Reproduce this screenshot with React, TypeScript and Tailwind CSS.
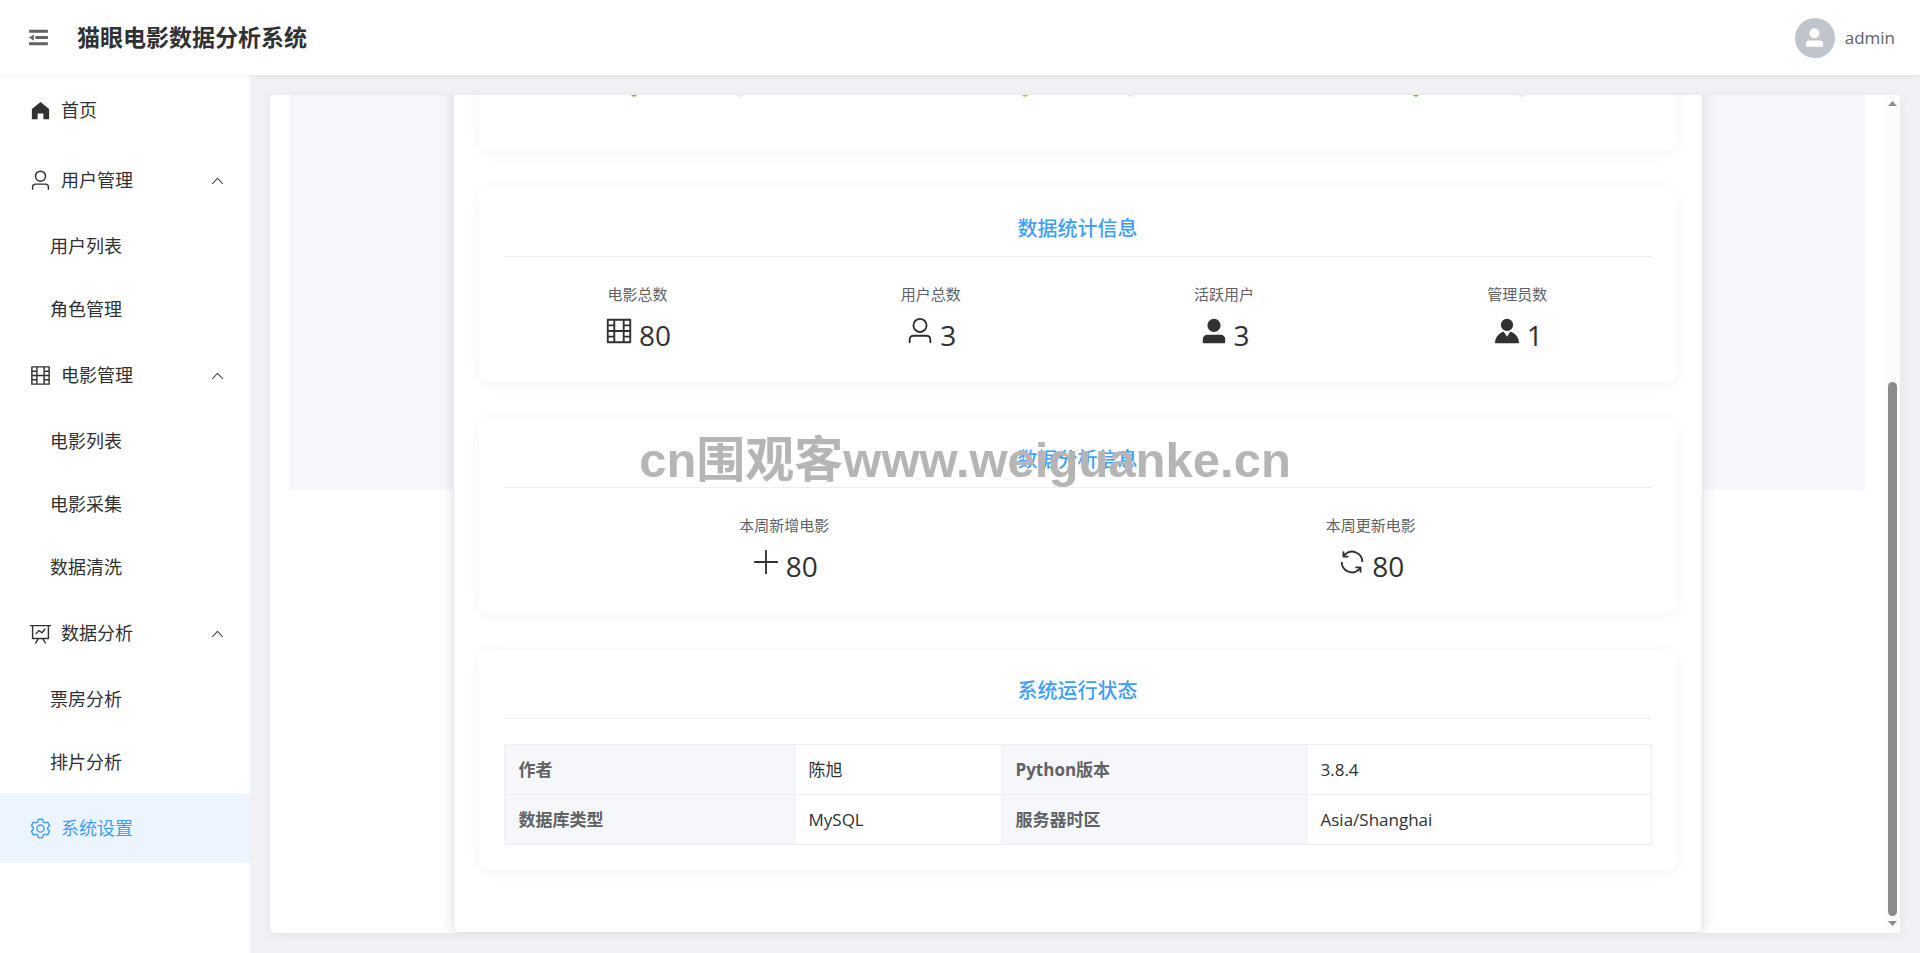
import React from "react";

const icons = {
  fold: "M896 192H128v128h768V192zm0 256H384v128h512V448zm0 256H128v128h768V704zM320 384 128 512l192 128V384z",
  home: "M512 128 128 447.936V896h255.936V640H640v256h255.936V447.936z",
  user: "M512 512a192 192 0 1 0 0-384 192 192 0 0 0 0 384zm0 64a256 256 0 1 1 0-512 256 256 0 0 1 0 512zm320 320v-96a96 96 0 0 0-96-96H288a96 96 0 0 0-96 96v96a32 32 0 1 1-64 0v-96a160 160 0 0 1 160-160h448a160 160 0 0 1 160 160v96a32 32 0 1 1-64 0z",
  userFilled:
    "M288 320a224 224 0 1 0 448 0 224 224 0 1 0-448 0zm544 608H160a32 32 0 0 1-32-32v-96a160 160 0 0 1 160-160h448a160 160 0 0 1 160 160v96a32 32 0 0 1-32 32z",
  avatar:
    "M628.736 528.896A416 416 0 0 1 928 928H96a415.872 415.872 0 0 1 299.264-399.104L512 704l116.736-175.104zM720 304a208 208 0 1 1-416 0 208 208 0 0 1 416 0z",
  film: "M160 160v704h704V160H160zm-32-64h768a32 32 0 0 1 32 32v768a32 32 0 0 1-32 32H128a32 32 0 0 1-32-32V128a32 32 0 0 1 32-32zM320 288V128h64v352h256V128h64v160h160v64H704v128h160v64H704v128h160v64H704v160h-64V544H384v352h-64V736H128v-64h192V544H128v-64h192V352H128v-64h192z",
  dataLine:
    "M359.168 768H160a32 32 0 0 1-32-32V192H64a32 32 0 0 1 0-64h896a32 32 0 1 1 0 64h-64v544a32 32 0 0 1-32 32H665.216l110.848 192h-73.856L591.36 768H433.024L322.176 960H248.32L359.168 768zM832 192H192v512h640V192zM342.656 534.656a32 32 0 1 1-45.312-45.312L444.992 341.76l125.44 94.08L679.04 300.032a32 32 0 1 1 49.92 39.936L581.632 524.224 451.008 426.24 342.656 534.592z",
  setting:
    "M600.704 64a32 32 0 0 1 30.464 22.208l35.2 109.376c14.784 7.232 28.928 15.36 42.432 24.512l112.384-24.192a32 32 0 0 1 34.432 15.36L944.32 364.8a32 32 0 0 1-4.032 37.504l-77.12 85.12a357.12 357.12 0 0 1 0 49.024l77.12 85.248a32 32 0 0 1 4.032 37.504l-88.704 153.6a32 32 0 0 1-34.432 15.296L708.8 803.904c-13.44 9.088-27.648 17.28-42.368 24.512l-35.264 109.376A32 32 0 0 1 600.704 960H423.296a32 32 0 0 1-30.464-22.208L357.696 828.48a351.616 351.616 0 0 1-42.56-24.64l-112.32 24.256a32 32 0 0 1-34.432-15.36L79.68 659.2a32 32 0 0 1 4.032-37.504l77.12-85.248a357.12 357.12 0 0 1 0-48.896l-77.12-85.248A32 32 0 0 1 79.68 364.8l88.704-153.6a32 32 0 0 1 34.432-15.296l112.32 24.256c13.568-9.152 27.776-17.408 42.56-24.64l35.2-109.312A32 32 0 0 1 423.232 64H600.64zm-23.424 64H446.72l-36.352 113.088-24.512 11.968a294.113 294.113 0 0 0-34.816 20.096l-22.656 15.36-116.224-25.088-65.28 113.152 79.68 88.192-1.92 27.136a293.12 293.12 0 0 0 0 40.192l1.92 27.136-79.808 88.192 65.344 113.152 116.224-25.024 22.656 15.296a294.113 294.113 0 0 0 34.816 20.096l24.512 11.968L446.72 896h130.688l36.48-113.152 24.448-11.904a288.282 288.282 0 0 0 34.752-20.096l22.592-15.296 116.288 25.024 65.28-113.152-79.744-88.192 1.92-27.136a293.12 293.12 0 0 0 0-40.256l-1.92-27.136 79.808-88.128-65.344-113.152-116.288 24.96-22.592-15.232a287.616 287.616 0 0 0-34.752-20.096l-24.448-11.904L577.344 128zM512 320a192 192 0 1 1 0 384 192 192 0 0 1 0-384zm0 64a128 128 0 1 0 0 256 128 128 0 0 0 0-256z",
  plus: "M480 480V128a32 32 0 0 1 64 0v352h352a32 32 0 1 1 0 64H544v352a32 32 0 1 1-64 0V544H128a32 32 0 0 1 0-64z",
  refresh:
    "M771.776 794.88A384 384 0 0 1 128 512h64a320 320 0 0 0 555.712 216.448H654.72a32 32 0 1 1 0-64h149.056a32 32 0 0 1 32 32v148.928a32 32 0 1 1-64 0v-50.56zM276.288 295.616h92.992a32 32 0 0 1 0 64H220.16a32 32 0 0 1-32-32V178.56a32 32 0 0 1 64 0v50.56A384 384 0 0 1 896.128 512h-64a320 320 0 0 0-555.776-216.384z",
  arrowUp:
    "m488.832 344.32-339.84 356.672a32 32 0 0 0 0 44.16l.384.384a29.44 29.44 0 0 0 42.688 0l320-335.872 319.872 335.872a29.44 29.44 0 0 0 42.688 0l.384-.384a32 32 0 0 0 0-44.16L535.168 344.32a32 32 0 0 0-46.336 0z",
};

type IconName = keyof typeof icons;

function Icon({ name, className }: { name: IconName; className: string }) {
  return (
    <svg
      viewBox="0 0 1024 1024"
      fill="currentColor"
      aria-hidden="true"
      className={`shrink-0 ${className}`}
    >
      <path d={icons[name]} />
    </svg>
  );
}

type MenuGroup = {
  title: string;
  icon: IconName;
  children?: string[];
};

const menu: MenuGroup[] = [
  { title: "首页", icon: "home" },
  { title: "用户管理", icon: "user", children: ["用户列表", "角色管理"] },
  {
    title: "电影管理",
    icon: "film",
    children: ["电影列表", "电影采集", "数据清洗"],
  },
  { title: "数据分析", icon: "dataLine", children: ["票房分析", "排片分析"] },
  { title: "系统设置", icon: "setting" },
];

function Sidebar({ active }: { active: string }) {
  return (
    <nav className="w-[250px] shrink-0 overflow-hidden bg-white text-lg">
      {menu.map(({ title, icon, children }) =>
        children ? (
          <div key={title}>
            <button
              type="button"
              aria-expanded="true"
              className="flex h-[70px] w-full cursor-pointer items-center px-[25px]"
            >
              <span className="flex w-[30px] justify-center">
                <Icon name={icon} className="size-[23px]" />
              </span>
              <span className="ml-1.5 grow text-left">{title}</span>
              <Icon name="arrowUp" className="size-[15px]" />
            </button>
            <ul
              className={`flex flex-col ${
                children.length > 2 ? "h-[188px]" : "h-[125px]"
              }`}
            >
              {children.map((child) => (
                <li key={child} className="flex flex-1">
                  <a href="#" className="flex grow items-center pl-[50px]">
                    {child}
                  </a>
                </li>
              ))}
            </ul>
          </div>
        ) : (
          <a
            key={title}
            href="#"
            className={`flex h-[70px] items-center px-[25px] ${
              active === title ? "bg-[#ecf5ff] text-[#409eff]" : ""
            }`}
          >
            <span className="flex w-[30px] justify-center">
              <Icon name={icon} className="size-[23px]" />
            </span>
            <span className="ml-1.5">{title}</span>
          </a>
        )
      )}
    </nav>
  );
}

function Header() {
  return (
    <header className="z-10 flex h-[75px] shrink-0 items-center bg-white pr-[25px] pl-[26px] shadow-[0_1px_5px_rgba(0,21,41,0.08)]">
      <button
        type="button"
        aria-label="折叠菜单"
        className="cursor-pointer text-[#606266]"
      >
        <Icon name="fold" className="size-[25px]" />
      </button>
      <h1 className="ml-[26px] grow text-[23px] font-bold">
        猫眼电影数据分析系统
      </h1>
      <button
        type="button"
        className="flex cursor-pointer items-center gap-2.5 text-[#606266]"
      >
        <span className="flex size-10 items-center justify-center rounded-full bg-[#c0c4cc] text-white">
          <Icon name="userFilled" className="size-[23px]" />
        </span>
        admin
      </button>
    </header>
  );
}

function Section({
  title,
  children,
}: {
  title: string;
  children: React.ReactNode;
}) {
  return (
    <section className="mb-[37px] rounded-[10px] bg-white p-[25px] shadow-[0_2px_15px_rgba(0,0,0,0.05)]">
      <h2 className="mb-[25px] border-b border-[#ebeef5] pb-[11px] text-center text-xl leading-8 font-medium text-[#409eff]">
        {title}
      </h2>
      {children}
    </section>
  );
}

type Stat = { label: string; icon: IconName; value: number };

const totals: Stat[] = [
  { label: "电影总数", icon: "film", value: 80 },
  { label: "用户总数", icon: "user", value: 3 },
  { label: "活跃用户", icon: "userFilled", value: 3 },
  { label: "管理员数", icon: "avatar", value: 1 },
];

const weekly: Stat[] = [
  { label: "本周新增电影", icon: "plus", value: 80 },
  { label: "本周更新电影", icon: "refresh", value: 80 },
];

function Statistic({ label, icon, value }: Stat) {
  return (
    <div className="text-center">
      <div className="mb-1.5 text-[15px] leading-6 text-[#606266]">{label}</div>
      <div className="flex h-[45px] items-center justify-center gap-[5px] text-[28px]">
        <Icon name={icon} className="mb-2 size-[30px]" />
        {value}
      </div>
    </div>
  );
}

const ARC = 2 * Math.PI * 75 * 0.75;

function Gauge({ percent, color }: { percent: number; color: string }) {
  return (
    <svg
      viewBox="0 0 158 158"
      fill="none"
      strokeWidth="7"
      strokeLinecap="round"
      aria-hidden="true"
      className="mx-auto size-[158px]"
    >
      <g transform="rotate(135 79 79)">
        <circle
          cx="79"
          cy="79"
          r="75"
          stroke="#ebeef5"
          strokeDasharray={`${ARC} 999`}
        />
        <circle
          cx="79"
          cy="79"
          r="75"
          stroke={color}
          strokeDasharray={`${(ARC * percent) / 100} 999`}
        />
      </g>
    </svg>
  );
}

const status = [
  ["作者", "陈旭", "Python版本", "3.8.4"],
  ["数据库类型", "MySQL", "服务器时区", "Asia/Shanghai"],
];

function StatusTable() {
  return (
    <table className="w-full table-fixed border-collapse text-left">
      <colgroup>
        <col className="w-[290px]" />
        <col className="w-[207px]" />
        <col className="w-[305px]" />
        <col />
      </colgroup>
      <tbody>
        {status.map((row) => (
          <tr key={row[0]} className="h-[50px]">
            {row.map((cell, index) =>
              index % 2 === 0 ? (
                <th
                  key={index}
                  scope="row"
                  className="border border-[#ebeef5] bg-[#f5f7fa] px-3.5 font-bold text-[#606266]"
                >
                  {cell}
                </th>
              ) : (
                <td key={index} className="border border-[#ebeef5] px-3.5">
                  {cell}
                </td>
              )
            )}
          </tr>
        ))}
      </tbody>
    </table>
  );
}

function Scrollbar() {
  return (
    <div className="flex w-[15px] shrink-0 flex-col items-center bg-[#fcfcfc] text-[#8b8b8b]">
      <svg viewBox="0 0 15 17" fill="currentColor" className="h-[17px] w-[15px]">
        <path d="M3 11 7.5 6 12 11z" />
      </svg>
      <div className="grow-[270]" />
      <div className="w-[9px] grow-[533] rounded-full bg-[#8b8b8b]" />
      <svg viewBox="0 0 15 17" fill="currentColor" className="h-[17px] w-[15px]">
        <path d="M3 5 7.5 10 12 5z" />
      </svg>
    </div>
  );
}

function SystemInfo() {
  return (
    <div className="grid min-w-0 grow grid-rows-[minmax(0,1fr)] overflow-hidden px-5">
      <div className="col-start-1 row-start-1 h-[395px] bg-[#f5f7fa]" />
      {/* long card, kept scrolled to its end */}
      <div className="col-start-1 row-start-1 mx-auto w-full max-w-[1250px] self-end rounded-[5px] border border-[#e4e7ed] bg-white p-[25px] shadow-[0_0_15px_rgba(0,0,0,0.12)]">
        <section className="mb-[37px] grid grid-cols-3 gap-[25px] rounded-[10px] bg-white px-[25px] pt-[25px] pb-8 shadow-[0_2px_15px_rgba(0,0,0,0.05)]">
          <Gauge percent={20} color="#67c23a" />
          <Gauge percent={70} color="#e6a23c" />
          <Gauge percent={40} color="#67c23a" />
        </section>
        <Section title="数据统计信息">
          <div className="grid grid-cols-4 gap-[25px]">
            {totals.map((stat) => (
              <Statistic key={stat.label} {...stat} />
            ))}
          </div>
        </Section>
        <Section title="数据分析信息">
          <div className="grid grid-cols-2 gap-[25px]">
            {weekly.map((stat) => (
              <Statistic key={stat.label} {...stat} />
            ))}
          </div>
        </Section>
        <Section title="系统运行状态">
          <StatusTable />
        </Section>
      </div>
    </div>
  );
}

export default function App() {
  return (
    <div className="relative flex h-screen flex-col overflow-hidden font-['Open_Sans','Noto_Sans_CJK_SC',sans-serif] text-[17px] text-[#303133]">
      <Header />
      <div className="flex min-h-0 grow">
        <Sidebar active="系统设置" />
        <main className="flex min-w-0 grow bg-[#f0f2f5] p-5">
          <div className="flex min-w-0 grow overflow-hidden rounded-l-[5px] bg-white shadow-[0_2px_12px_rgba(0,0,0,0.06)]">
            <SystemInfo />
            <Scrollbar />
          </div>
        </main>
      </div>
      <div className="pointer-events-none absolute inset-0 z-20 flex items-center justify-center pb-8 pl-2.5 font-['Liberation_Sans','Noto_Sans_CJK_SC',sans-serif] text-[49px] font-bold text-[#b5b5b5]">
        cn围观客www.weiguanke.cn
      </div>
    </div>
  );
}
